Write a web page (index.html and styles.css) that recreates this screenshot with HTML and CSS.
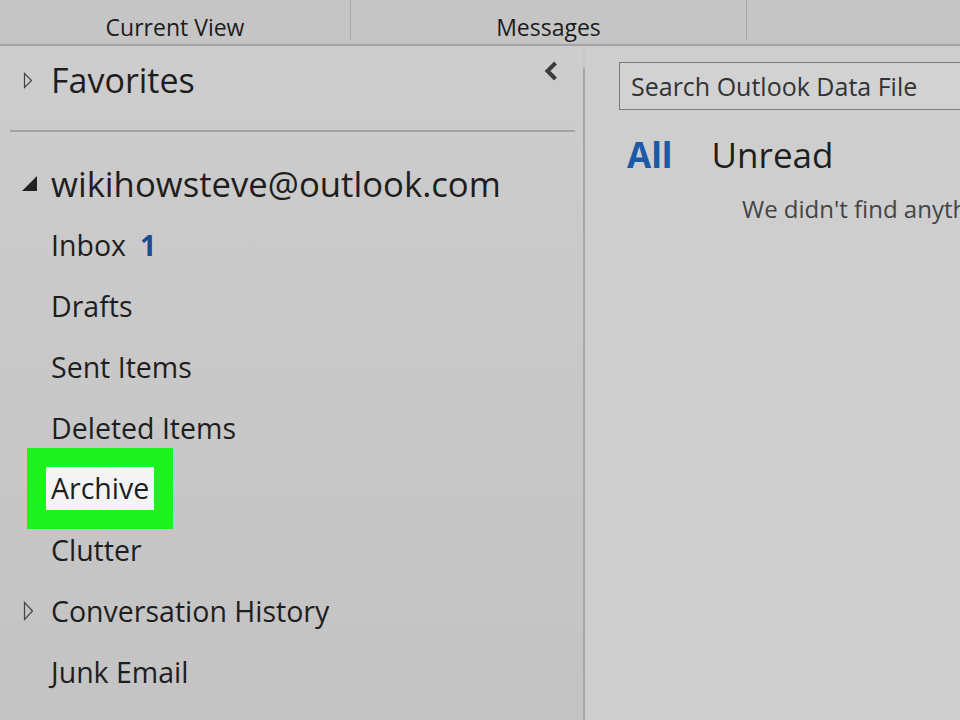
FILE: index.html
```html
<!DOCTYPE html>
<html lang="en">
<head>
    <meta charset="UTF-8">
    <title>Outlook - Folders</title>
    <link rel="stylesheet" href="styles.css">
</head>
<body>
    <div class="window">
        <!-- Ribbon tabs -->
        <div class="ribbon">
            <div class="tab tab-view">Current View</div>
            <div class="tab tab-messages">Messages</div>
            <div class="tab tab-rest"></div>
        </div>

        <div class="main">
            <!-- Folder pane -->
            <div class="folder-pane">
                <div class="row favorites">
                    <span class="gutter">
                        <svg width="10" height="17" viewBox="0 0 10 17"><path d="M1.5 1.5 L8.5 8.5 L1.5 15.5 Z" fill="none" stroke="#444" stroke-width="1.2"/></svg>
                    </span>
                    <span class="label">Favorites</span>
                    <span class="collapse">
                        <svg width="16" height="22" viewBox="0 0 16 22"><path d="M12.5 3 L4.5 11 L12.5 19" fill="none" stroke="#3c3c3c" stroke-width="4"/></svg>
                    </span>
                </div>

                <div class="separator"></div>

                <div class="row account">
                    <span class="gutter">
                        <svg width="17" height="16" viewBox="0 0 17 16"><path d="M16 0 L16 15 L1 15 Z" fill="#222"/></svg>
                    </span>
                    <span class="label">wikihowsteve@outlook.com</span>
                </div>

                <div class="row folder"><span class="gutter"></span><span class="label">Inbox</span><span class="count">1</span></div>
                <div class="row folder"><span class="gutter"></span><span class="label">Drafts</span></div>
                <div class="row folder"><span class="gutter"></span><span class="label">Sent Items</span></div>
                <div class="row folder"><span class="gutter"></span><span class="label">Deleted Items</span></div>
                <div class="row folder"><span class="gutter"></span><span class="label highlight">Archive</span></div>
                <div class="row folder"><span class="gutter"></span><span class="label">Clutter</span></div>
                <div class="row folder">
                    <span class="gutter">
                        <svg width="11" height="20" viewBox="0 0 11 20"><path d="M1.5 1.5 L9.5 10 L1.5 18.5 Z" fill="none" stroke="#444" stroke-width="1.2"/></svg>
                    </span>
                    <span class="label">Conversation History</span>
                </div>
                <div class="row folder"><span class="gutter"></span><span class="label">Junk Email</span></div>
            </div>

            <div class="divider"></div>

            <!-- Message list -->
            <div class="message-pane">
                <div class="search">Search Outlook Data File</div>
                <div class="filters">
                    <span class="filter active">All</span>
                    <span class="filter">Unread</span>
                </div>
                <div class="empty">We didn't find anything to show here.</div>
            </div>
        </div>
    </div>
</body>
</html>
```

FILE: styles.css
```css
/* Base */
body {
    margin: 0;
    font-family: 'Open Sans', 'Noto Sans', sans-serif;
    color: #1e1e1e;
    background: #c8c8c8;
}

.window {
    width: 960px;
    height: 720px;
    overflow: hidden;
    display: flex;
    flex-direction: column;
}

/* Ribbon */
.ribbon {
    height: 44px;
    display: flex;
    background-color: #c5c5c5;
    border-bottom: 2px solid #a3a3a3;
    flex-shrink: 0;
}

.tab {
    font-size: 23px;
    line-height: 54px;
    height: 40px;
    text-align: center;
    color: #1c1c1c;
}

.tab-view {
    width: 350px;
    border-right: 1px solid #a9a9a9;
}

.tab-messages {
    width: 395px;
    border-right: 1px solid #a9a9a9;
}

.tab-rest {
    flex: 1;
}

/* Main area */
.main {
    flex: 1;
    display: flex;
    min-height: 0;
}

.folder-pane {
    width: 583px;
    flex-shrink: 0;
    background: linear-gradient(to bottom, #cdcdcd, #c3c3c3);
}

.divider {
    width: 2px;
    margin-top: 22px;
    background-color: #a8a8a8;
}

.row {
    display: flex;
    align-items: center;
    height: 61px;
    font-size: 28.5px;
}

.gutter {
    width: 51px;
    flex-shrink: 0;
    display: flex;
    align-items: center;
    padding-left: 23px;
    box-sizing: border-box;
}

.favorites {
    height: 68px;
    font-size: 34px;
    position: relative;
}

.collapse {
    position: absolute;
    left: 543px;
    top: 14px;
    display: flex;
}

.separator {
    height: 2px;
    margin: 16px 8px 21px 10px;
    background-color: #a3a3a3;
}

.account {
    font-size: 34.7px;
}

.account .gutter {
    padding-left: 21px;
}

.count {
    margin-left: 14px;
    font-weight: bold;
    color: #1b4d92;
}

.highlight {
    display: inline-block;
    height: 43px;
    line-height: 43px;
    padding: 0 5px;
    margin-left: -5px;
    background-color: #f4f4f4;
    outline: 19px solid #1df21f;
}

/* Message pane */
.message-pane {
    flex: 1;
    min-width: 0;
    background-color: #cecece;
    padding: 16px 0 0 34px;
    overflow: hidden;
    white-space: nowrap;
}

.search {
    height: 46px;
    line-height: 46px;
    border: 1px solid #7c7c7c;
    border-right: none;
    padding-left: 11px;
    font-size: 25px;
    color: #333;
    background-color: #d2d2d2;
}

.filters {
    margin-top: 22px;
    font-size: 35px;
    line-height: 46px;
    padding-left: 8px;
}

.filter {
    margin-right: 30px;
    color: #1e1e1e;
}

.filter.active {
    font-weight: bold;
    color: #1a5aa6;
}

.empty {
    margin-top: 14px;
    padding-left: 123px;
    font-size: 24px;
    color: #444;
}
```
